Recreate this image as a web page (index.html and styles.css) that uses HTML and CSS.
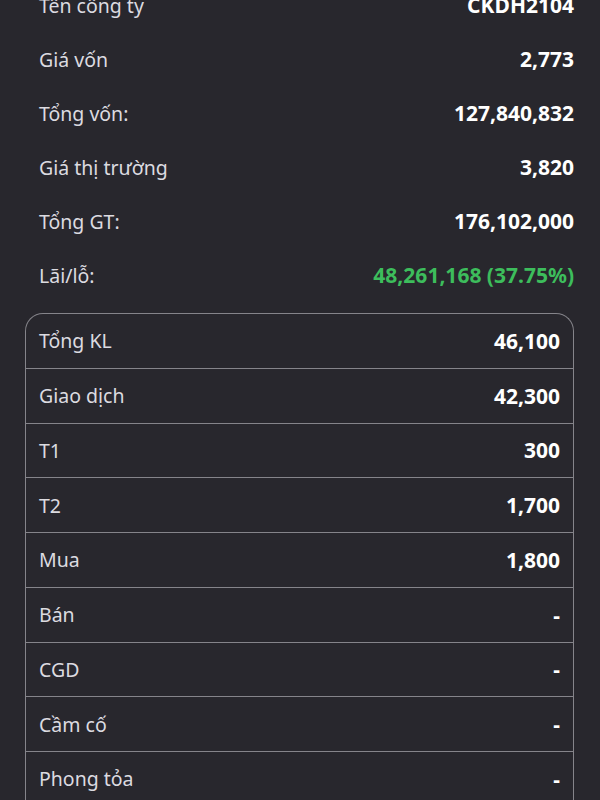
FILE: index.html
```html
<!DOCTYPE html>
<html lang="vi">
<head>
<meta charset="utf-8">
<link rel="stylesheet" href="styles.css">
</head>
<body>
<div class="page">
  <div class="summary">
    <div class="row"><span class="label">Tên công ty</span><span class="value">CKDH2104</span></div>
    <div class="row"><span class="label">Giá vốn</span><span class="value">2,773</span></div>
    <div class="row"><span class="label">Tổng vốn:</span><span class="value">127,840,832</span></div>
    <div class="row"><span class="label">Giá thị trường</span><span class="value">3,820</span></div>
    <div class="row"><span class="label">Tổng GT:</span><span class="value">176,102,000</span></div>
    <div class="row"><span class="label">Lãi/lỗ:</span><span class="value green">48,261,168 (37.75%)</span></div>
  </div>
  <div class="table">
    <div class="trow"><span class="label">Tổng KL</span><span class="value">46,100</span></div>
    <div class="trow"><span class="label">Giao dịch</span><span class="value">42,300</span></div>
    <div class="trow"><span class="label">T1</span><span class="value">300</span></div>
    <div class="trow"><span class="label">T2</span><span class="value">1,700</span></div>
    <div class="trow"><span class="label">Mua</span><span class="value">1,800</span></div>
    <div class="trow"><span class="label">Bán</span><span class="value">-</span></div>
    <div class="trow"><span class="label">CGD</span><span class="value">-</span></div>
    <div class="trow"><span class="label">Cầm cố</span><span class="value">-</span></div>
    <div class="trow"><span class="label">Phong tỏa</span><span class="value">-</span></div>
  </div>
</div>
</body>
</html>
```
FILE: styles.css
```css
html, body {
  margin: 0;
  padding: 0;
  background: #28272d;
  height: 100%;
  overflow: hidden;
}
body {
  font-family: "Noto Sans", "Open Sans", sans-serif;
  font-size: 19.5px;
  color: #dedde2;
}
.page {
  padding: 0 26px 0 25px;
  margin-top: -22px;
}
.summary {
  padding-left: 14px;
}
.row {
  display: flex;
  justify-content: space-between;
  align-items: center;
  height: 54px;
}
.label {
  color: #dcdbe0;
}
.value {
  font-weight: 700;
  font-size: 21px;
  color: #ffffff;
}
.value.green {
  color: #3dbd5c;
}
.table {
  margin-top: 11px;
  border: 1.5px solid #85848a;
  border-bottom: none;
  border-radius: 18px 18px 0 0;
}
.trow {
  display: flex;
  justify-content: space-between;
  align-items: center;
  height: 53.75px;
  padding: 0 13px 0 13px;
  border-bottom: 1px solid #85848a;
}
```
